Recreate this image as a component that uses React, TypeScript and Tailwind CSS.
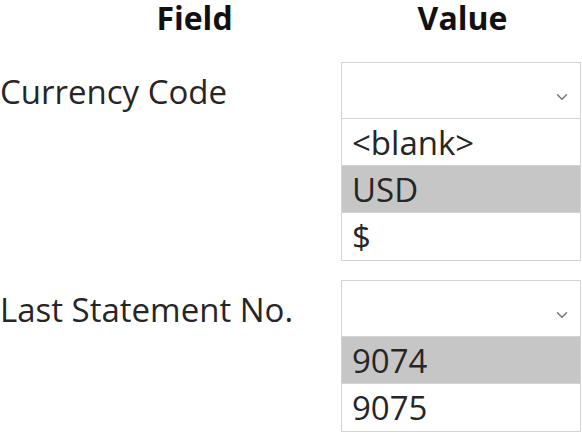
import React from "react";
import { ChevronDown } from "lucide-react";

interface FieldRow {
    label: string;
    options: string[];
    selected: string;
}

const ROWS: FieldRow[] = [
    { label: "Currency Code", options: ["<blank>", "USD", "$"], selected: "USD" },
    { label: "Last Statement No.", options: ["9074", "9075"], selected: "9074" },
];

const DropdownBox: React.FC<{ options: string[]; selected: string }> = ({ options, selected }) => (
    <div className="w-[240px] border border-[#d4d4d4] bg-white">
        <div className="h-[56px] flex items-end justify-end pr-[9px] pb-[12px] border-b border-[#d4d4d4]">
            <ChevronDown className="w-[18px] h-[18px] text-[#777]" strokeWidth={2} />
        </div>
        {options.map((opt) => (
            <div
                key={opt}
                className={`h-[47px] flex items-center px-[10px] text-[33px] leading-none text-[#262626] border-b border-[#d4d4d4] last:border-b-0 ${opt === selected ? "bg-[#c6c6c6]" : "bg-white"}`}
            >
                {opt}
            </div>
        ))}
    </div>
);

export default function App() {
    return (
        <div className="w-[582px] h-[434px] bg-white overflow-hidden" style={{ fontFamily: "'Open Sans', 'Noto Sans', sans-serif" }}>
            <div className="grid grid-cols-[341px_241px] h-[62px]">
                <div className="flex justify-center pl-[48px] text-[32px] font-bold text-[#111] leading-[36px]">Field</div>
                <div className="flex justify-center pl-[2px] text-[32px] font-bold text-[#111] leading-[36px]">Value</div>
            </div>
            <div className="flex flex-col gap-[19px]">
                {ROWS.map((row) => (
                    <div key={row.label} className="grid grid-cols-[341px_241px] items-start">
                        <div className="h-[58px] flex items-center text-[33px] leading-none text-[#262626] whitespace-nowrap">{row.label}</div>
                        <DropdownBox options={row.options} selected={row.selected} />
                    </div>
                ))}
            </div>
        </div>
    );
}
